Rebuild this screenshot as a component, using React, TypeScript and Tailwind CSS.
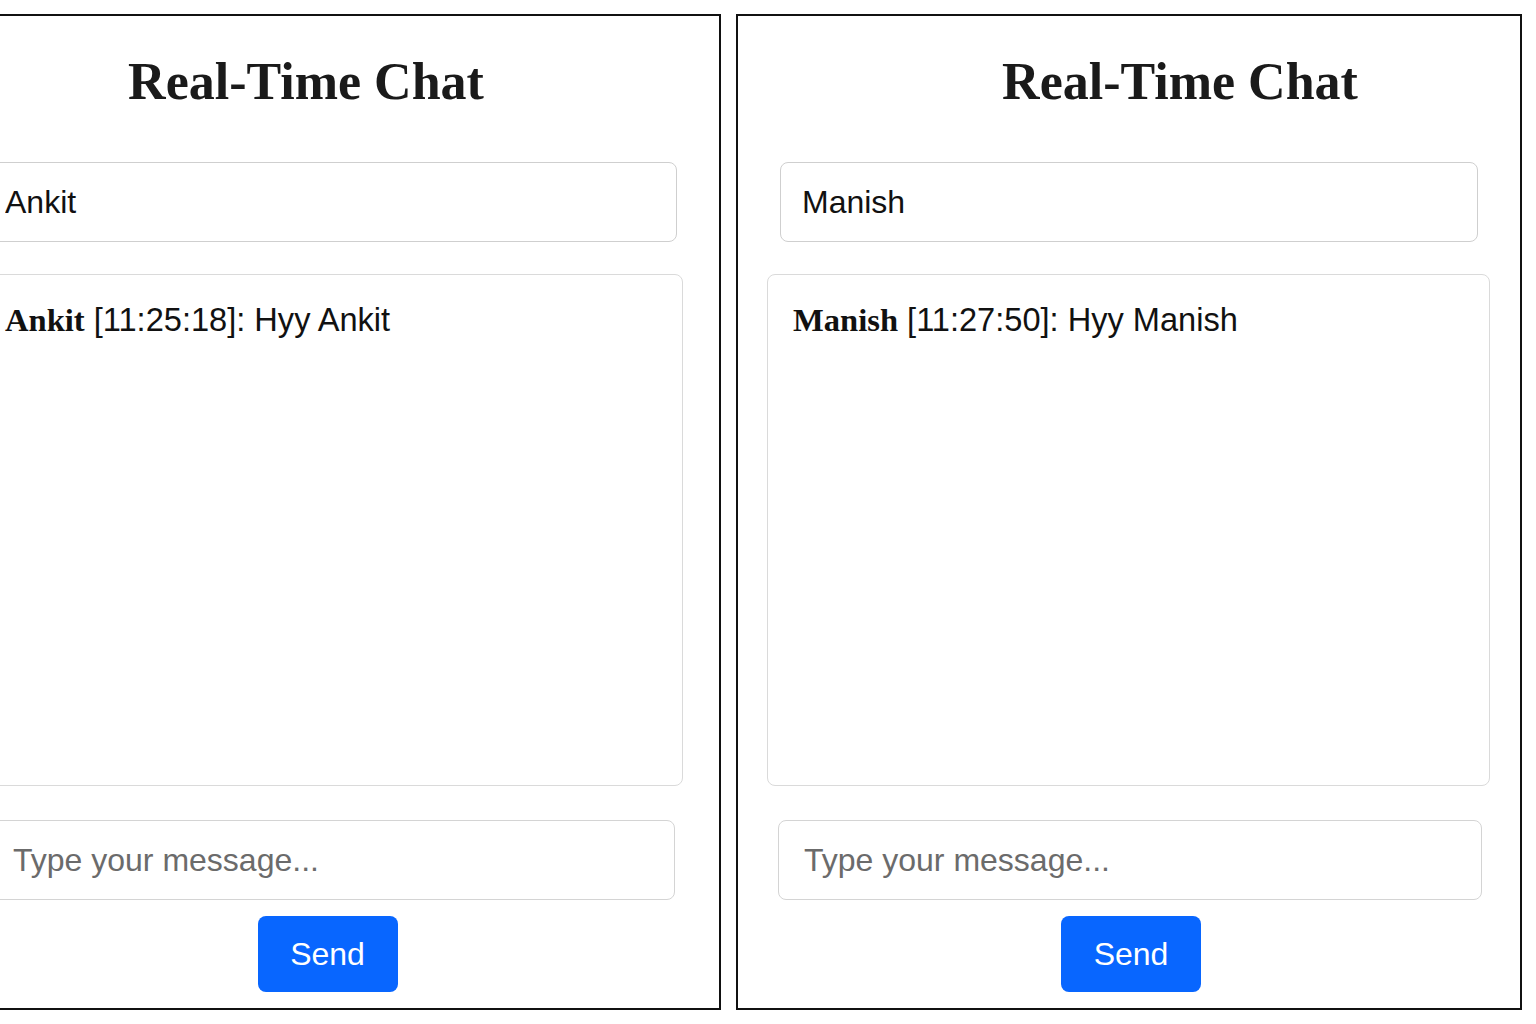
type PanelProps = {
  name: string;
  time: string;
  text: string;
  titleShift: string;
  nameBox: string;
  msgBox: string;
  inputBox: string;
  sendShift: string;
};

const sans = "font-['Liberation_Sans',Arial,sans-serif]";
const serif = "font-['Liberation_Serif','Times_New_Roman',serif]";

function ChatPanel({ name, time, text, titleShift, nameBox, msgBox, inputBox, sendShift }: PanelProps) {
  return (
    <div className="w-[786px] h-[996px] shrink-0 border-2 border-[#111] bg-white flex flex-col">
      <h1
        className={`${serif} ${titleShift} pt-[37px] text-center text-[52px] leading-[58px] font-bold text-[#1a1a1a]`}
      >
        Real-Time Chat
      </h1>

      <input
        readOnly
        defaultValue={name}
        className={`${sans} ${nameBox} mt-[51px] h-[80px] border-[1.5px] border-[#cfcfcf] rounded-[8px] text-[32px] text-[#111] outline-none`}
      />

      <div
        className={`${msgBox} mt-[32px] h-[512px] border-[1.5px] border-[#dadada] rounded-[8px] pt-[26px]`}
      >
        <div className={`${sans} text-[32.6px] leading-[38px] text-[#111]`}>
          <strong className={`${serif} font-bold`}>{name}</strong> [{time}]: {text}
        </div>
      </div>

      <input
        placeholder="Type your message..."
        className={`${sans} ${inputBox} mt-[34px] h-[80px] border-[1.5px] border-[#d4d4d4] rounded-[8px] text-[32px] text-[#111] placeholder:text-[#6b6b6b] outline-none`}
      />

      <div className={`${sendShift} flex justify-center mt-[16px]`}>
        <button
          className={`${sans} w-[140px] h-[76px] rounded-[8px] bg-[#0866ff] text-white text-[32px]`}
        >
          Send
        </button>
      </div>
    </div>
  );
}

export default function App() {
  return (
    <div className="w-[1536px] h-[1024px] overflow-hidden bg-white flex gap-[15px] pt-[14px]">
      <div className="ml-[-65px] flex">
        <ChatPanel
          name="Ankit"
          time="11:25:18"
          text="Hyy Ankit"
          titleShift="pr-[44px]"
          nameBox="mx-[42px] pl-[25px]"
          msgBox="mx-[36px] pl-[31px]"
          inputBox="mx-[44px] pl-[31px]"
          sendShift="pr-[1px]"
        />
      </div>
      <ChatPanel
        name="Manish"
        time="11:27:50"
        text="Hyy Manish"
        titleShift="pl-[102px]"
        nameBox="mx-[42px] pl-[21px]"
        msgBox="ml-[29px] mr-[30px] pl-[25px]"
        inputBox="ml-[40px] mr-[38px] pl-[25px]"
        sendShift="pl-[4px]"
      />
    </div>
  );
}
